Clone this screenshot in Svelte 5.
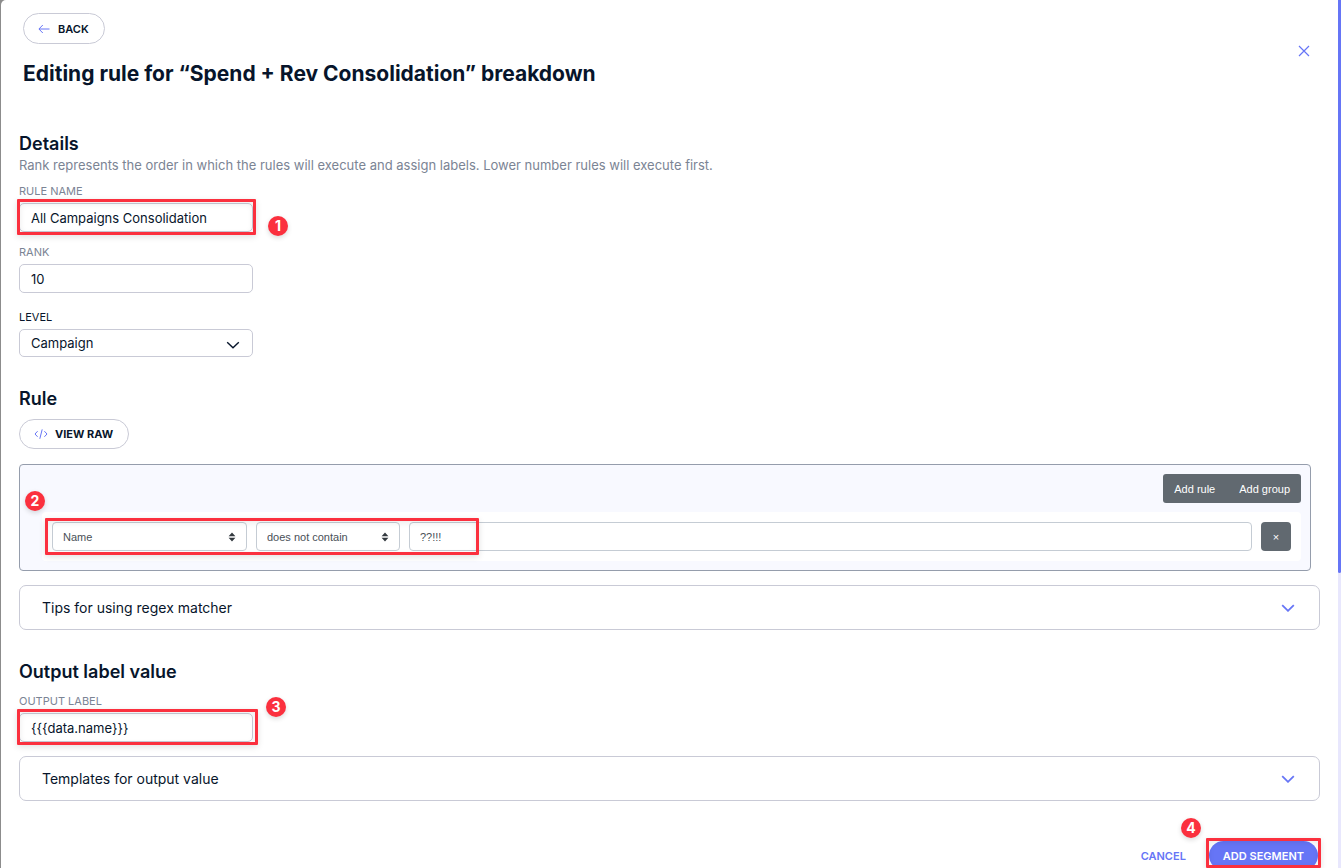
<script>
  let ruleName = $state('All Campaigns Consolidation');
  let rank = $state('10');
  let level = $state('Campaign');
  let field = $state('Name');
  let operator = $state('does not contain');
  let value = $state('??!!!');
  let outputLabel = $state('{{{data.name}}}');
</script>

{#snippet chevron()}
  <svg class="chevron" viewBox="0 0 14 8" width="14" height="8" aria-hidden="true">
    <path d="M1.2 1.2 L7 6.8 L12.8 1.2" />
  </svg>
{/snippet}

{#snippet sorter()}
  <svg class="sorter" viewBox="0 0 8 10" width="8" height="10" aria-hidden="true">
    <path d="M4 0.6 L7.4 4.2 H0.6 Z M4 9.4 L0.6 5.8 H7.4 Z" />
  </svg>
{/snippet}

<div class="modal">
  <main class="content">
    <header class="header">
      <div>
        <button class="pill">
          <svg viewBox="0 0 12 10" width="12" height="10" aria-hidden="true">
            <path d="M11.5 5 H1 M4.8 1 L0.9 5 L4.8 9" />
          </svg>
          Back
        </button>
        <h1>Editing rule for “Spend + Rev Consolidation” breakdown</h1>
      </div>
      <button class="close" aria-label="Close">
        <svg viewBox="0 0 12 12" width="12" height="12" aria-hidden="true">
          <path d="M1 1 L11 11 M11 1 L1 11" />
        </svg>
      </button>
    </header>

    <section class="details">
      <h2>Details</h2>
      <p>Rank represents the order in which the rules will execute and assign labels. Lower number rules will execute first.</p>

      <label for="rule-name">Rule name</label>
      <div class="field">
        <input id="rule-name" type="text" bind:value={ruleName} />
        <span class="highlight"></span>
        <span class="step step-one">1</span>
      </div>

      <label class="spaced" for="rank">Rank</label>
      <div class="field">
        <input id="rank" type="text" bind:value={rank} />
      </div>

      <label class="spaced dark" for="level">Level</label>
      <div class="field">
        <select id="level" bind:value={level}>
          <option>Campaign</option>
          <option>Ad set</option>
          <option>Ad</option>
        </select>
        {@render chevron()}
      </div>
    </section>

    <section class="rule">
      <h2>Rule</h2>
      <button class="pill raw">
        <svg viewBox="0 0 14 10" width="14" height="10" aria-hidden="true">
          <path d="M3.6 2.2 L1 5 L3.6 7.8 M10.4 2.2 L13 5 L10.4 7.8 M8.2 0.4 L5.8 9.8" />
        </svg>
        View raw
      </button>

      <div class="builder">
        <div class="builder-actions">
          <button>Add rule</button>
          <button>Add group</button>
        </div>
        <div class="rule-row">
          <div class="picker name">
            <select aria-label="Field" bind:value={field}>
              <option>Name</option>
              <option>ID</option>
            </select>
            {@render sorter()}
          </div>
          <div class="picker operator">
            <select aria-label="Operator" bind:value={operator}>
              <option>does not contain</option>
              <option>contains</option>
            </select>
            {@render sorter()}
          </div>
          <input type="text" aria-label="Value" bind:value />
          <button class="remove" aria-label="Remove rule">×</button>
          <span class="highlight"></span>
          <span class="step step-two">2</span>
        </div>
      </div>

      <button class="accordion">
        Tips for using regex matcher
        {@render chevron()}
      </button>
    </section>

    <section class="output">
      <h2>Output label value</h2>
      <label for="output-label">Output label</label>
      <div class="field">
        <input id="output-label" type="text" bind:value={outputLabel} />
        <span class="highlight wide"></span>
        <span class="step step-three">3</span>
      </div>

      <button class="accordion">
        Templates for output value
        {@render chevron()}
      </button>
    </section>

    <footer class="footer">
      <button class="cancel">Cancel</button>
      <div class="submit">
        <button class="primary">Add segment</button>
        <span class="highlight"></span>
        <span class="step step-four">4</span>
      </div>
    </footer>
  </main>

  <div class="track" aria-hidden="true">
    <div class="thumb"></div>
  </div>
</div>

<style>
  :global(body) {
    margin: 0;
    background: #8c8c8c;
  }

  .modal {
    --ink: #07152b;
    --muted: #7b8494;
    --line: #c9cad6;
    --accent: #6675f6;
    --alert: #fb303e;
    display: flex;
    box-sizing: border-box;
    height: 100vh;
    margin-left: 1px;
    overflow: hidden;
    border-top-left-radius: 5px;
    background: #fff;
    color: var(--ink);
    font-family: Inter, "Liberation Sans", sans-serif;
  }

  .modal * {
    box-sizing: border-box;
  }

  .content {
    flex: 1;
    min-width: 0;
    padding: 13px 18px 0;
  }

  .track {
    flex: 0 0 3px;
    background: #e8e7fd;
  }

  .thumb {
    height: 66%;
    border-radius: 0 0 2px 2px;
    background: var(--accent);
  }

  button,
  input,
  select {
    margin: 0;
    font-family: inherit;
    color: inherit;
  }

  button {
    padding: 0;
    border: none;
    background: none;
    cursor: pointer;
  }

  svg {
    flex: none;
    fill: none;
    stroke: var(--accent);
    stroke-width: 1;
  }

  h1,
  h2,
  p {
    margin: 0;
  }

  h1 {
    margin-top: 16px;
    font-size: 21px;
    font-weight: 700;
    line-height: 28px;
  }

  h2 {
    font-size: 18px;
    font-weight: 600;
    line-height: 24px;
  }

  p {
    color: var(--muted);
    font-size: 13px;
    line-height: 18px;
  }

  .header {
    display: flex;
    justify-content: space-between;
    align-items: flex-start;
    padding-left: 4px;
  }

  .pill {
    display: flex;
    align-items: center;
    gap: 8px;
    height: 31px;
    padding: 0 15px 0 14px;
    border: 1px solid var(--line);
    border-radius: 16px;
    font-size: 11px;
    font-weight: 600;
    text-transform: uppercase;
  }

  .raw {
    gap: 7px;
    height: 30px;
    margin-top: 8px;
    font-weight: 700;
  }

  .close {
    display: flex;
    margin: 32px 10px 0 0;
  }

  .close svg {
    stroke-width: 1.2;
  }

  .details {
    margin-top: 44px;
  }

  label {
    display: block;
    color: var(--muted);
    font-size: 11px;
    line-height: 14px;
    text-transform: uppercase;
  }

  p + label {
    margin-top: 10px;
  }

  .spaced {
    margin-top: 13px;
  }

  .dark {
    margin-top: 17px;
    color: var(--ink);
  }

  .field {
    position: relative;
    width: 234px;
    margin-top: 5px;
  }

  .field input,
  .field select {
    display: block;
    appearance: none;
    width: 100%;
    height: 29px;
    padding: 0 11px;
    border: 1px solid var(--line);
    border-radius: 5px;
    background: #fff;
    font-size: 13px;
  }

  .field select {
    height: 28px;
  }

  .field .chevron {
    position: absolute;
    top: 12px;
    right: 13px;
    stroke: var(--ink);
    stroke-width: 1.4;
    pointer-events: none;
  }

  .rule {
    margin-top: 30px;
  }

  .builder {
    margin: 15px 9px 14px 0;
    padding: 9px;
    border: 1px solid #959dac;
    border-radius: 4px;
    background: #f8f9ff;
    font-family: "Liberation Sans", Arial, sans-serif;
  }

  .builder-actions {
    display: flex;
    gap: 2px;
    width: max-content;
    margin-left: auto;
    border-radius: 3px;
    background: #616970;
  }

  .builder-actions button {
    height: 29px;
    padding: 0 11px;
    color: #fff;
    font-size: 11px;
  }

  .rule-row {
    position: relative;
    display: flex;
    gap: 9px;
    margin: 9px 0 0 13px;
    padding: 10px;
    border-radius: 4px;
    background: #fff;
  }

  .picker {
    position: relative;
  }

  .name {
    width: 195px;
  }

  .operator {
    width: 144px;
  }

  .rule-row select,
  .rule-row input {
    appearance: none;
    width: 100%;
    height: 29px;
    padding: 0 10px;
    border: 1px solid #c5ccd4;
    border-radius: 4px;
    background: #fff;
    color: #495057;
    font-size: 11px;
  }

  .rule-row input {
    flex: 1;
    min-width: 0;
  }

  .sorter {
    position: absolute;
    top: 10px;
    right: 11px;
    fill: #343a40;
    stroke: none;
    pointer-events: none;
  }

  .remove {
    width: 30px;
    height: 29px;
    border-radius: 4px;
    background: #616970;
    color: #fff;
    font-size: 11px;
  }

  .accordion {
    display: flex;
    align-items: center;
    justify-content: space-between;
    width: 100%;
    height: 45px;
    padding: 0 24px 0 22px;
    border: 1px solid var(--line);
    border-radius: 7px;
    font-size: 14px;
  }

  .accordion .chevron {
    stroke-width: 1.8;
  }

  .output {
    margin-top: 30px;
  }

  .output label {
    margin-top: 10px;
  }

  .output .accordion {
    margin-top: 14px;
  }

  .footer {
    display: flex;
    justify-content: flex-end;
    gap: 23px;
    margin-top: 40px;
    padding-right: 2px;
  }

  .footer button {
    height: 29px;
    font-size: 11px;
    font-weight: 600;
    text-transform: uppercase;
  }

  .cancel {
    color: var(--accent);
  }

  .submit {
    position: relative;
  }

  .footer .primary {
    padding: 0 14px;
    border-radius: 15px;
    background: var(--accent);
    color: #fff;
  }

  /* Walkthrough markers drawn over the form */
  .highlight {
    position: absolute;
    inset: -4px -3px -3px -2px;
    border: 3px solid var(--alert);
    border-radius: 1px;
    box-shadow: 0 2px 6px rgba(0, 0, 0, 0.12), inset 0 2px 6px rgba(0, 0, 0, 0.08);
    pointer-events: none;
  }

  .wide {
    right: -5px;
  }

  .rule-row .highlight {
    inset: 6px auto 6px 3px;
    width: 434px;
  }

  .submit .highlight {
    inset: -3px -3px 2px -3px;
  }

  .step {
    position: absolute;
    width: 20px;
    height: 20px;
    border-radius: 50%;
    background: var(--alert);
    box-shadow: 0 2px 5px rgba(0, 0, 0, 0.15);
    color: #fff;
    font-family: Inter, sans-serif;
    font-size: 14px;
    font-weight: 700;
    line-height: 20px;
    text-align: center;
  }

  .step-one {
    top: 13px;
    left: 249px;
  }

  .step-two {
    top: -21px;
    left: -17px;
  }

  .step-three {
    top: -16px;
    left: 247px;
  }

  .step-four {
    top: -23px;
    left: -28px;
  }
</style>
